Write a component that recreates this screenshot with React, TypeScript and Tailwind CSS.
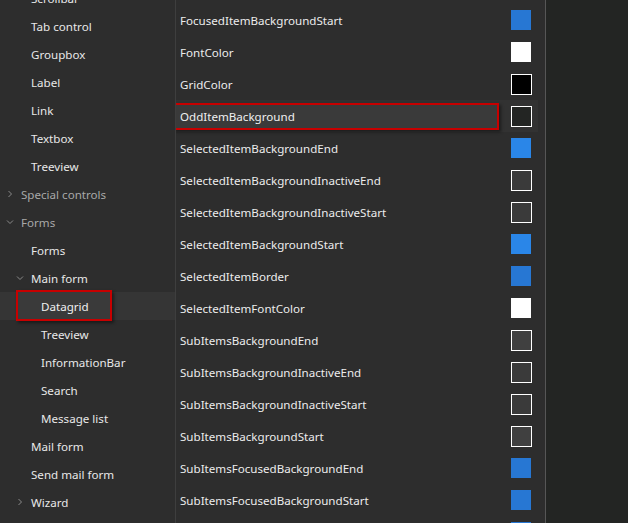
import React from 'react'

type NavItem = {
  label: string
  level: number
  chevron?: 'right' | 'down'
  dim?: boolean
  selected?: boolean
}

const nav: NavItem[] = [
  { label: 'Scrollbar', level: 1 },
  { label: 'Tab control', level: 1 },
  { label: 'Groupbox', level: 1 },
  { label: 'Label', level: 1 },
  { label: 'Link', level: 1 },
  { label: 'Textbox', level: 1 },
  { label: 'Treeview', level: 1 },
  { label: 'Special controls', level: 0, chevron: 'right', dim: true },
  { label: 'Forms', level: 0, chevron: 'down', dim: true },
  { label: 'Forms', level: 1 },
  { label: 'Main form', level: 1, chevron: 'down' },
  { label: 'Datagrid', level: 2, selected: true },
  { label: 'Treeview', level: 2 },
  { label: 'InformationBar', level: 2 },
  { label: 'Search', level: 2 },
  { label: 'Message list', level: 2 },
  { label: 'Mail form', level: 1 },
  { label: 'Send mail form', level: 1 },
  { label: 'Wizard', level: 1, chevron: 'right' },
]

type Swatch = 'blue' | 'bright' | 'white' | 'black' | 'dark' | 'gray' | 'gray2'

const props: { name: string; swatch: Swatch; focused?: boolean }[] = [
  { name: 'FocusedItemBackgroundStart', swatch: 'blue' },
  { name: 'FontColor', swatch: 'white' },
  { name: 'GridColor', swatch: 'black' },
  { name: 'OddItemBackground', swatch: 'dark', focused: true },
  { name: 'SelectedItemBackgroundEnd', swatch: 'bright' },
  { name: 'SelectedItemBackgroundInactiveEnd', swatch: 'gray' },
  { name: 'SelectedItemBackgroundInactiveStart', swatch: 'gray' },
  { name: 'SelectedItemBackgroundStart', swatch: 'bright' },
  { name: 'SelectedItemBorder', swatch: 'blue' },
  { name: 'SelectedItemFontColor', swatch: 'white' },
  { name: 'SubItemsBackgroundEnd', swatch: 'gray2' },
  { name: 'SubItemsBackgroundInactiveEnd', swatch: 'gray' },
  { name: 'SubItemsBackgroundInactiveStart', swatch: 'gray' },
  { name: 'SubItemsBackgroundStart', swatch: 'gray2' },
  { name: 'SubItemsFocusedBackgroundEnd', swatch: 'blue' },
  { name: 'SubItemsFocusedBackgroundStart', swatch: 'blue' },
  { name: 'SubItemsFocusedBorder', swatch: 'blue' },
]

const swatchClass: Record<Swatch, string> = {
  blue: 'w-5 h-5 bg-[#2777d3]',
  bright: 'w-5 h-5 bg-[#2a86e8]',
  white: 'w-5 h-5 bg-white',
  black: 'w-[21px] h-[21px] bg-black border border-white',
  dark: 'w-[21px] h-[21px] bg-[#232523] border border-white',
  gray: 'w-[21px] h-[21px] bg-[#3a3a3a] border border-white',
  gray2: 'w-[21px] h-[21px] bg-[#404040] border border-white',
}

const Chevron = ({ dir }: { dir: 'right' | 'down' }) => (
  <svg width="8" height="8" viewBox="0 0 8 8" className="shrink-0">
    {dir === 'right' ? (
      <polyline points="2.5,1 5.5,4 2.5,7" fill="none" stroke="#8a8a8a" strokeWidth="1" />
    ) : (
      <polyline points="1,2.5 4,5.5 7,2.5" fill="none" stroke="#8a8a8a" strokeWidth="1" />
    )}
  </svg>
)

const indent = ['pl-[21px]', 'pl-[31px]', 'pl-[41px]']
const chevronPos = ['left-[6px]', 'left-[16px]', 'left-[26px]']

const App = () => {
  return (
    <div
      className="w-[628px] h-[523px] overflow-hidden flex bg-[#2d2d2d] text-[11.6px]"
      style={{ fontFamily: '"Noto Sans", "Open Sans", sans-serif' }}
    >
      {/* Tree */}
      <div className="w-[176px] shrink-0 border-r border-[#3e3e3e] overflow-hidden">
        <div className="-mt-[16px]">
          {nav.map((item, i) => (
            <div
              key={i}
              className={`relative h-[28px] flex items-center ${item.selected ? 'bg-[#353535]' : ''}`}
            >
              {item.chevron && (
                <span className={`absolute ${chevronPos[item.level]} top-[10px]`}>
                  <Chevron dir={item.chevron} />
                </span>
              )}
              {item.selected ? (
                <div className="absolute left-[16px] -top-[2px] w-[96px] h-[31px] border-2 border-[#c80000] bg-[#3a3a3a] shadow-[2px_2px_3px_rgba(0,0,0,0.45)] flex items-center pl-[23px] pt-[2px] text-[#f0f0f0]">
                  {item.label}
                </div>
              ) : (
                <span className={`${indent[item.level]} pt-[2px] ${item.dim ? 'text-[#a8a8a8]' : 'text-[#e8e8e8]'}`}>
                  {item.label}
                </span>
              )}
            </div>
          ))}
        </div>
      </div>

      {/* Property grid */}
      <div className="w-[370px] shrink-0 border-r border-[#565656] overflow-hidden">
        <div className="pt-[4px] w-[362px]">
          {props.map((p) => (
            <div
              key={p.name}
              className={`relative h-[32px] flex items-center justify-between pl-[4px] pr-[6px] ${p.focused ? 'bg-[#323232]' : ''}`}
            >
              {p.focused ? (
                <div className="absolute -left-[3px] top-[3px] w-[326px] h-[27px] border-2 border-[#c80000] bg-[#3a3a3a] shadow-[2px_2px_3px_rgba(0,0,0,0.45)] flex items-center pl-[5px] pt-[1px] text-[#f0f0f0]">
                  {p.name}
                </div>
              ) : (
                <span className="text-[#ececec] pt-[2px]">{p.name}</span>
              )}
              <span className="ml-auto w-[21px] flex items-center">
                <span className={swatchClass[p.swatch]} />
              </span>
            </div>
          ))}
        </div>
      </div>

      <div className="flex-1 bg-[#232523]" />
    </div>
  )
}

export default App
